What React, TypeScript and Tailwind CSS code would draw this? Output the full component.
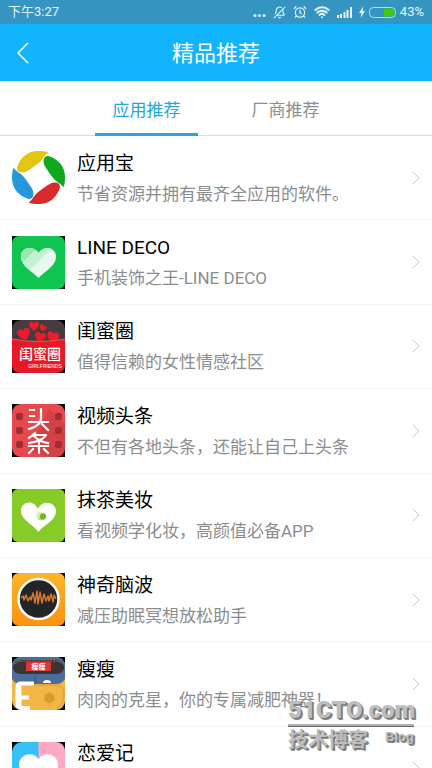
import React, { useState } from "react";
import { BellOff, AlarmClock, Wifi } from "lucide-react";

interface AppItem {
  id: string;
  name: string;
  desc: string;
  icon: React.ReactNode;
}

const PETAL = "M5.500 15 C9 6 16 0 26 0 C31 0 34 .5 36.3 1.5 C32.500 4 31.500 8 28 11 C23 15 19 18 14.500 20.500 C8 23 3.500 20 5.500 15Z";

// App logos, all drawn on a 53 x 53 grid
const YybIcon = () => (
  <svg viewBox="0 0 53 53" className="size-full">
    <path d={PETAL} fill="#e3c40f" />
    <path d={PETAL} fill="#0fa81e" transform="rotate(90 26.5 26.5)" />
    <path d={PETAL} fill="#d82a2c" transform="rotate(180 26.5 26.5)" />
    <path d={PETAL} fill="#2398dc" transform="rotate(270 26.5 26.5)" />
  </svg>
);

const LineDecoIcon = () => (
  <svg viewBox="0 0 53 53" className="size-full">
    <defs>
      <clipPath id="deco-heart">
        <path d="M26.500 42 C20 35 9 30 9 21 C9 11 21 9 26.500 17 C32 9 44 11 44 21 C44 30 33 35 26.500 42Z" />
      </clipPath>
    </defs>
    <rect width="53" height="53" fill="#000" />
    <rect width="53" height="53" rx="7" fill="#0fc550" />
    <g clipPath="url(#deco-heart)">
      <rect width="53" height="53" fill="#e9f8ee" />
      <path d="M0 0H52L17 35L0 48Z" fill="#c6f0d3" />
      <path d="M0 0H37L10 27H0Z" fill="#9be5b3" />
    </g>
  </svg>
);

const Heart = ({ x, y, s, r }: { x: number; y: number; s: number; r: number }) => (
  <path
    d="M0 5 C-2 3 -5 1 -5 -1.500 C-5 -5 -1 -5 0 -2.500 C1 -5 5 -5 5 -1.500 C5 1 2 3 0 5Z"
    fill="#ee1b2c"
    transform={`translate(${x} ${y}) rotate(${r}) scale(${s})`}
  />
);

const GuimiIcon = () => (
  <svg viewBox="0 0 53 53" className="size-full">
    <rect width="53" height="53" fill="#000" />
    <rect width="53" height="53" rx="9" fill="#463c3d" />
    <Heart x={22} y={6} s={1} r={0} />
    <Heart x={31} y={8} s={0.7} r={25} />
    <Heart x={12} y={14} s={1.3} r={-15} />
    <Heart x={28} y={17} s={1.1} r={15} />
    <Heart x={41} y={17} s={1.2} r={10} />
    <path d="M0 19 Q26 24 53 19 V44 Q53 53 44 53 H9 Q0 53 0 44Z" fill="#e61a27" />
    <path d="M0 19 Q26 24 53 19" fill="none" stroke="#f4545c" />
    <text x="28" y="39" textAnchor="middle" fontSize="14" fontWeight="500" fill="#fff" fontFamily="'Noto Sans CJK SC', sans-serif">闺蜜圈</text>
    <text x="33" y="48" textAnchor="middle" fontSize="5" fill="#fff" fontFamily="'Liberation Sans', sans-serif">GIRLFRIENDS</text>
  </svg>
);

const ToutiaoIcon = () => (
  <svg viewBox="0 0 53 53" className="size-full">
    <rect width="53" height="53" fill="#000" />
    <rect width="53" height="53" rx="9" fill="#e64a4d" />
    <path d="M37 5 L53 20 V44 Q53 53 44 53 H38 L16 48Z" fill="#c93a40" opacity=".65" />
    {[9, 23, 37].map((y) => (
      <g key={y} fill="#a12c34">
        <rect x="4" y={y} width="7" height="7" rx="2" />
        <rect x="43" y={y} width="7" height="7" rx="2" />
      </g>
    ))}
    <g fill="none" stroke="#fff" strokeWidth="2.200" strokeLinecap="square" strokeLinejoin="round">
      <path d="M18 6H22M18 12H22M17 18H36M29 5V14Q29 22 17 25M30 20L36 26" />
      <path d="M23 29L17 34M21 31H34Q31 37 17 39M22 32Q28 38 36 39M17 42H36M27 38V49M21 45L17 49M32 45L36 49" />
    </g>
  </svg>
);

const MochaIcon = () => (
  <svg viewBox="0 0 53 53" className="size-full">
    <defs>
      <linearGradient id="mocha-leaf" x1="0" x2="1" y2="1">
        <stop stopColor="#fff" />
        <stop offset="1" stopColor="#8fca45" />
      </linearGradient>
    </defs>
    <rect width="53" height="53" fill="#000" />
    <rect width="53" height="53" rx="6" fill="#86cb27" />
    <path d="M26.500 43 C22 36 9 31 9 22 C9 12 22 10 26 20 C30 10 44 13 44 22 C44 32 31 36 26.500 43Z" fill="#fff" />
    <path d="M26 20 C22 27 26 33 31 31 C34 30 35 26 32 24 C29 23 27 24 26 20Z" fill="url(#mocha-leaf)" />
    <circle cx="31" cy="27.500" r="3" fill="#6eb51f" />
  </svg>
);

const BrainIcon = () => (
  <svg viewBox="0 0 53 53" className="size-full">
    <defs>
      <linearGradient id="brain-bg" x2="0" y2="1">
        <stop stopColor="#fdb52b" />
        <stop offset="1" stopColor="#fb920e" />
      </linearGradient>
    </defs>
    <rect width="53" height="53" fill="#000" />
    <rect width="53" height="53" rx="7" fill="url(#brain-bg)" />
    <circle cx="26.500" cy="26" r="20" fill="#242426" stroke="#fff" strokeWidth="2.500" />
    <path
      d="M9 25L11 23L12 27L14 22L16 28L18 24L19 27L21 20L23 30L25 18L26 31L28 19L30 30L32 21L34 28L36 23L37 28L39 21L41 29L42 22L44 26"
      fill="none" stroke="#d9772a" strokeWidth="1.500" strokeLinejoin="round"
    />
  </svg>
);

const ShouIcon = () => (
  <svg viewBox="0 0 53 53" className="size-full">
    <rect width="53" height="53" fill="#000" />
    <rect width="53" height="53" rx="9" fill="#f3b545" />
    <path d="M0 10Q0 0 9 0H44Q53 0 53 10V22Q50 27 44 27H9Q3 27 0 22Z" fill="#4c6c9b" />
    <path d="M1 9Q3 3 10 3H43Q50 3 52 9V12Q50 17 44 17H9Q3 17 1 12Z" fill="#3a3436" />
    <path d="M3 7Q6 4 11 4H43Q48 4 50 7" fill="none" stroke="#a97842" strokeDasharray="2 1" />
    <rect x="14" y="5" width="25" height="9" fill="#dc3537" />
    <text x="26.500" y="12" textAnchor="middle" fontSize="7" fontWeight="700" fill="#fff" fontFamily="'Noto Sans CJK SC', sans-serif">瘦瘦</text>
    <path d="M23 18V26" stroke="#37537e" />
    <path d="M20 28H45Q52 30 52 36Q52 47 45 51" fill="none" stroke="#d99a31" />
    <path d="M31 26Q31 23 35 23Q39 23 39 26Z" fill="#fff" />
    <path d="M22 26.500H9Q5.500 26.500 5.500 30V47Q5.500 51 10 51H18M3 40.500H17" fill="none" stroke="#fff" strokeWidth="4" />
    <path d="M8 29V49" stroke="#fff" strokeWidth="3" />
    <circle cx="37.500" cy="41" r="5" fill="#d99a31" />
    <path d="M37.500 34V49M32 38L43 44M43 38L32 44" stroke="#d99a31" strokeWidth=".7" />
  </svg>
);

const LoveIcon = () => (
  <svg viewBox="0 0 53 53" className="size-full">
    <rect width="53" height="53" fill="#000" />
    <rect width="53" height="53" rx="10" fill="#35c1fa" />
    <path d="M26.500 0H43Q53 0 53 10V43Q53 53 43 53H26.500Z" fill="#fda9c4" />
    <path d="M26.500 46C20 40 7 33 7 23C7 11 22 9 26.500 17C31 9 46 11 46 23C46 33 33 40 26.500 46Z" fill="#fff" />
  </svg>
);

const APPS: AppItem[] = [
  { id: "yyb", name: "应用宝", desc: "节省资源并拥有最齐全应用的软件。", icon: <YybIcon /> },
  { id: "deco", name: "LINE DECO", desc: "手机装饰之王-LINE DECO", icon: <LineDecoIcon /> },
  { id: "guimi", name: "闺蜜圈", desc: "值得信赖的女性情感社区", icon: <GuimiIcon /> },
  { id: "toutiao", name: "视频头条", desc: "不但有各地头条，还能让自己上头条", icon: <ToutiaoIcon /> },
  { id: "mocha", name: "抹茶美妆", desc: "看视频学化妆，高颜值必备APP", icon: <MochaIcon /> },
  { id: "brain", name: "神奇脑波", desc: "减压助眠冥想放松助手", icon: <BrainIcon /> },
  { id: "shou", name: "瘦瘦", desc: "肉肉的克星，你的专属减肥神器！", icon: <ShouIcon /> },
  { id: "love", name: "恋爱记", desc: "", icon: <LoveIcon /> },
];

const TABS = ["应用推荐", "厂商推荐"];

function StatusBar() {
  return (
    <div className="flex h-6 shrink-0 items-center justify-between bg-[#3694c1] px-2 text-[13px] text-[#e3f6ff]">
      <span>下午3:27</span>
      <div className="flex items-center gap-[7px]">
        <svg width="13" height="12" viewBox="0 0 13 12" fill="currentColor">
          <circle cx="2" cy="9.500" r="1.500" />
          <circle cx="6.500" cy="9.500" r="1.500" />
          <circle cx="11" cy="9.500" r="1.500" />
        </svg>
        <BellOff size={13} strokeWidth={2} className="-scale-x-100" />
        <AlarmClock size={14} strokeWidth={2} />
        <Wifi size={16} strokeWidth={3} />
        <svg width="15" height="12" viewBox="0 0 15 12" fill="currentColor">
          <path d="M0 9h2v3H0zM3 8h2v4H3zM6.500 6h2v6h-2zM9.500 4h2v8h-2zM13 1h2v11h-2z" />
        </svg>
        <div className="flex items-center gap-1">
          <svg width="6" height="12" viewBox="0 0 6 12" fill="currentColor">
            <path d="M4.500 0L0 7h2.500L1.500 12L6 5H3.500Z" />
          </svg>
          <svg width="27" height="11" viewBox="0 0 27 11">
            <rect x=".5" y=".5" width="26" height="10" rx="4" fill="none" stroke="#b5dcee" />
            <path d="M15 1.500H22Q25.500 1.500 25.500 5.500T22 9.500H15Z" fill="#43c80c" />
          </svg>
          <span>43%</span>
        </div>
      </div>
    </div>
  );
}

// Site stamp over the bottom right corner
function Stamp() {
  return (
    <div className="pointer-events-none absolute right-[18px] bottom-[17px] w-[126px] text-[#bdbdbd] [text-shadow:1px_1px_0_#777,2px_2px_0_#8a8a8a]">
      <div className="text-[24px] leading-[28px] font-black">51CTO.com</div>
      <div className="h-[3px] border-b border-[#666] bg-[#b0b0b0]" />
      <div className="flex justify-between pt-0.5">
        <span className="text-[20px] leading-[22px] font-bold">技术博客</span>
        <span className="font-['Liberation_Sans',sans-serif] text-[13px] leading-4 font-bold">Blog</span>
      </div>
    </div>
  );
}

export default function App() {
  const [activeTab, setActiveTab] = useState(0);

  return (
    <div lang="zh-CN" className="relative flex h-screen flex-col overflow-hidden bg-white font-[Roboto,'Noto_Sans_CJK_SC',sans-serif]">
      <StatusBar />

      <header className="relative flex h-[58px] shrink-0 items-center justify-center border-b border-[#d9f6ff] bg-[#12b4fb] pt-0.5 text-white">
        <button type="button" aria-label="返回" className="absolute inset-y-0 left-0 flex w-12 cursor-pointer items-center pl-4">
          <svg width="13" height="22" viewBox="0 0 13 22" fill="none" stroke="currentColor" strokeWidth="1.500">
            <path d="M12 1L2 11L12 21" />
          </svg>
        </button>
        <h1 className="text-[22px] leading-[30px]">精品推荐</h1>
      </header>

      <nav className="flex h-[54px] shrink-0 justify-center gap-9 border-b border-[#d8dcdc]">
        {TABS.map((tab, idx) => (
          <button
            key={tab}
            type="button"
            onClick={() => setActiveTab(idx)}
            className={`-mb-px w-[103px] cursor-pointer border-b-3 pt-1.5 text-[17px] ${
              activeTab === idx ? "border-[#23a7e0] text-[#23a7e0]" : "border-transparent text-[#8e8e8e]"
            }`}
          >
            {tab}
          </button>
        ))}
      </nav>

      <main className="min-h-0 flex-1 overflow-y-auto [scrollbar-width:none]">
        <ul className="grid min-h-[675px] auto-rows-fr">
          {APPS.map((app) => (
            <li key={app.id} className="border-b border-[#f3f3f3]">
              <button type="button" className="flex size-full cursor-pointer items-center px-3 text-left">
                <span className="size-[53px] shrink-0">{app.icon}</span>
                <span className="ml-3 flex min-w-0 flex-1 flex-col pt-0.5">
                  <span className="text-[19px] leading-[30px] text-black">{app.name}</span>
                  <span className="h-[30px] truncate text-[17px] leading-[30px] text-[#8a8d90]">{app.desc}</span>
                </span>
                <svg width="8" height="14" viewBox="0 0 8 14" fill="none" stroke="#c8c8c8">
                  <path d="M1 1L7 7L1 13" />
                </svg>
              </button>
            </li>
          ))}
        </ul>
      </main>

      <Stamp />
    </div>
  );
}
